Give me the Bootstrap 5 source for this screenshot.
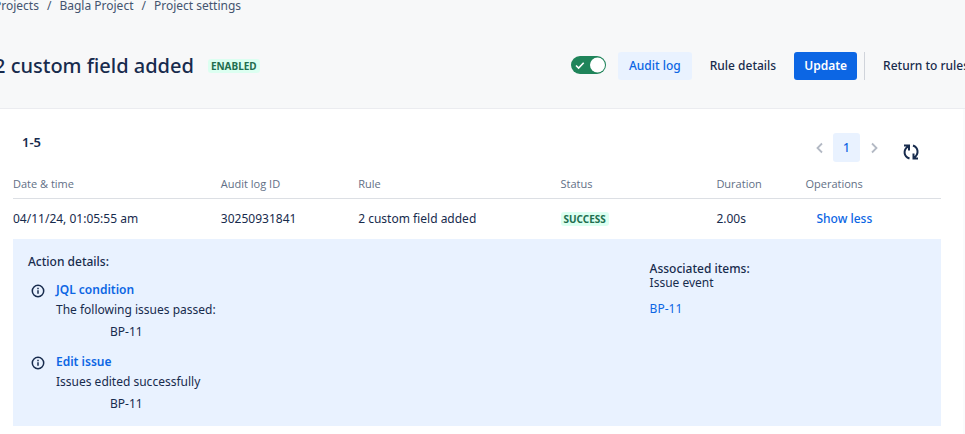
<!DOCTYPE html>
<html lang="en">
<head>
<meta charset="utf-8">
<meta name="viewport" content="width=device-width, initial-scale=1">
<title>Audit log</title>
<link href="https://cdn.jsdelivr.net/npm/bootstrap@5.3.0/dist/css/bootstrap.min.css" rel="stylesheet">
<style>
body { font-family: "Noto Sans", "Open Sans", sans-serif; font-size: 12px; line-height: 20px; color: #172b4d; background: #fff; overflow-x: hidden; }
a, .text-link { color: #0c66e4; text-decoration: none; }
.page-head { background: #f7f8f9; border-bottom: 1px solid #ebecf0; height: 109px; overflow: hidden; }
.crumbs { margin: -4px 0 0 -6px; }
.crumbs .breadcrumb-item, .crumbs a { color: #44546f; }
.crumbs .breadcrumb-item + .breadcrumb-item { padding-left: 8px; }
.crumbs .breadcrumb-item + .breadcrumb-item::before { color: #44546f; padding-right: 8px; }
.title-row { margin: 36px -15px 0 -6px; }
.title-group { gap: 14px; }
.page-title { font-size: 20px; line-height: 28px; font-weight: 500; }
.lozenge { font-size: 10px; line-height: 14px; font-weight: 700; color: #216e4e; background: #dcfff1; border-radius: 3px; padding: 0 3px; }
.rule-switch { padding: 0; min-height: 0; }
.rule-switch .form-check-input { float: none; display: block; width: 35px; height: 18px; margin: 0 12px 2px 0; border: 0; background-color: #1f845a; }
.rule-switch .form-check-input:checked { background-color: #1f845a; background-size: 35px 18px; background-image: url("data:image/svg+xml,%3Csvg xmlns='http://www.w3.org/2000/svg' viewBox='0 0 35 18'%3E%3Cpath d='M5 9.5l2.6 2.6L12.7 6.7' fill='none' stroke='white' stroke-width='1.6'/%3E%3Ccircle cx='26.5' cy='9' r='7.5' fill='white'/%3E%3C/svg%3E"); }
.bar-group { gap: 7px; }
.bar-btn { font-size: 12px; line-height: 20px; padding: 4px 11px; border: 0; border-radius: 3px; font-weight: 500; color: #172b4d; white-space: nowrap; }
.bar-btn.is-selected { color: #0c66e4; background: #e9f2ff; }
.bar-btn.is-primary { color: #fff; background: #0c66e4; font-weight: 600; padding: 4px 10px; }
.bar-rule { width: 1px; background: #d0d4db; }
.log-panel { padding: 24px 22px 8px 13px; border-right: 2px solid #fafbfc; }
.count { font-size: 13px; line-height: 18px; font-weight: 600; padding: 0 9px; }
.page-btn { width: 27px; height: 29px; padding: 0; border: 0; border-radius: 3px; background: none; color: #b3b9c4; font-size: 12px; font-weight: 500; }
.page-btn.is-current { background: #e9f2ff; color: #0c66e4; }
.refresh-btn { padding: 0; border: 0; background: none; color: #172b4d; width: 24px; height: 24px; margin: 7px 18px 0 12px; }
.log-table { table-layout: fixed; margin: 0; color: inherit; }
.log-table th, .log-table td { padding: 0; white-space: nowrap; border: 0; background: none; color: inherit; vertical-align: middle; }
.log-table th { font-family: "Open Sans", "Noto Sans", sans-serif; font-size: 11px; font-weight: 500; color: #626f86; height: 34px; padding-top: 6px; border-bottom: 1px solid #dcdfe4; }
.log-table .entry td { height: 41px; }
.col-date { width: 22.4%; } .col-id { width: 14.8%; } .col-rule { width: 21.8%; } .col-status { width: 16.8%; } .col-time { width: 9.6%; }
.link-btn { border: 0; background: none; padding: 0 11px; color: #0c66e4; font-weight: 500; }
.log-table td.details { background: #e9f2ff; vertical-align: top; }
.actions { width: 68.6%; padding: 13px 0 10px 15px; }
.related { padding-top: 23px; line-height: 14px; }
.heading { font-size: 12px; font-weight: 500; line-height: 20px; margin: 0; }
.heading.text-link { font-weight: 600; }
.action-item { padding-top: 8px; }
.action-icon { width: 16px; height: 16px; margin: 3px 10px 0 2px; }
.issue-key { padding: 2px 0 2px 54px; }
</style>
<script src="https://cdn.jsdelivr.net/npm/bootstrap@5.3.0/dist/js/bootstrap.bundle.min.js"></script>
</head>
<body>
<header class="page-head">
  <nav class="crumbs" aria-label="Breadcrumb">
    <ol class="breadcrumb mb-0 flex-nowrap">
      <li class="breadcrumb-item"><a href="#">Projects</a></li>
      <li class="breadcrumb-item"><a href="#">Bagla Project</a></li>
      <li class="breadcrumb-item"><a href="#">Project settings</a></li>
    </ol>
  </nav>
  <div class="title-row d-flex align-items-center justify-content-between">
    <div class="title-group d-flex align-items-center text-nowrap">
      <h1 class="page-title mb-0">2 custom field added</h1>
      <span class="lozenge">ENABLED</span>
    </div>
    <div class="d-flex align-items-center">
      <div class="form-check form-switch rule-switch mb-0"><input class="form-check-input" type="checkbox" role="switch" checked aria-label="Rule enabled"></div>
      <div class="bar-group d-flex">
        <button type="button" class="btn bar-btn is-selected">Audit log</button>
        <button type="button" class="btn bar-btn">Rule details</button>
        <button type="button" class="btn bar-btn is-primary">Update</button>
        <div class="bar-rule"></div>
        <button type="button" class="btn bar-btn">Return to rules</button>
      </div>
    </div>
  </div>
</header>
<main class="log-panel">
  <div class="d-flex justify-content-between align-items-start">
    <div class="count">1-5</div>
    <nav class="d-flex align-items-start" aria-label="Pages">
      <button type="button" class="page-btn" aria-label="Previous page"><svg width="8" height="12" viewBox="0 0 8 12" fill="none" stroke="currentColor" stroke-width="1.8"><path d="M6 1.500L1.500 6l4.500 4.500"/></svg></button>
      <button type="button" class="page-btn is-current">1</button>
      <button type="button" class="page-btn" aria-label="Next page"><svg width="8" height="12" viewBox="0 0 8 12" fill="none" stroke="currentColor" stroke-width="1.8"><path d="M2 1.500L6.500 6l-4.500 4.500"/></svg></button>
      <button type="button" class="refresh-btn" aria-label="Refresh"><svg class="d-block" width="24" height="24" viewBox="0 0 24 24" fill="none" stroke="currentColor" stroke-width="2"><path d="M10.500 18.500C4.500 16.500 4 10 9 6.500M5 5.500h5V10.500M14 5.500C19.500 7.500 20 14 15.500 17.500M19 18.500h-4.500V13.500"/></svg></button>
    </nav>
  </div>
  <table class="table log-table w-100">
    <colgroup><col class="col-date"><col class="col-id"><col class="col-rule"><col class="col-status"><col class="col-time"><col></colgroup>
    <thead><tr><th scope="col">Date &amp; time</th><th scope="col">Audit log ID</th><th scope="col">Rule</th><th scope="col">Status</th><th scope="col">Duration</th><th scope="col">Operations</th></tr></thead>
    <tbody>
      <tr class="entry"><td>04/11/24, 01:05:55 am</td><td>30250931841</td><td>2 custom field added</td><td><span class="lozenge d-inline-block">SUCCESS</span></td><td>2.00s</td><td><button type="button" class="link-btn">Show less</button></td></tr>
      <tr><td class="details" colspan="6">
        <div class="d-flex">
          <section class="actions">
            <h2 class="heading">Action details:</h2>
            <div class="action-item d-flex">
              <svg class="action-icon" viewBox="0 0 16 16" fill="none" stroke="#172b4d" stroke-width="1.5"><circle cx="8" cy="8" r="5.700"/><path d="M8 7.200v3.600M8 4.700v1.500"/></svg>
              <div><div class="text-link heading">JQL condition</div><div>The following issues passed:</div><div class="issue-key">BP-11</div></div>
            </div>
            <div class="action-item d-flex">
              <svg class="action-icon" viewBox="0 0 16 16" fill="none" stroke="#172b4d" stroke-width="1.5"><circle cx="8" cy="8" r="5.700"/><path d="M8 7.200v3.600M8 4.700v1.500"/></svg>
              <div><div class="text-link heading">Edit issue</div><div>Issues edited successfully</div><div class="issue-key">BP-11</div></div>
            </div>
          </section>
          <section class="related">
            <div class="fw-medium">Associated items:</div>
            <div>Issue event</div>
            <a href="#" class="d-block mt-2 pt-1">BP-11</a>
          </section>
        </div>
      </td></tr>
    </tbody>
  </table>
</main>
</body>
</html>
